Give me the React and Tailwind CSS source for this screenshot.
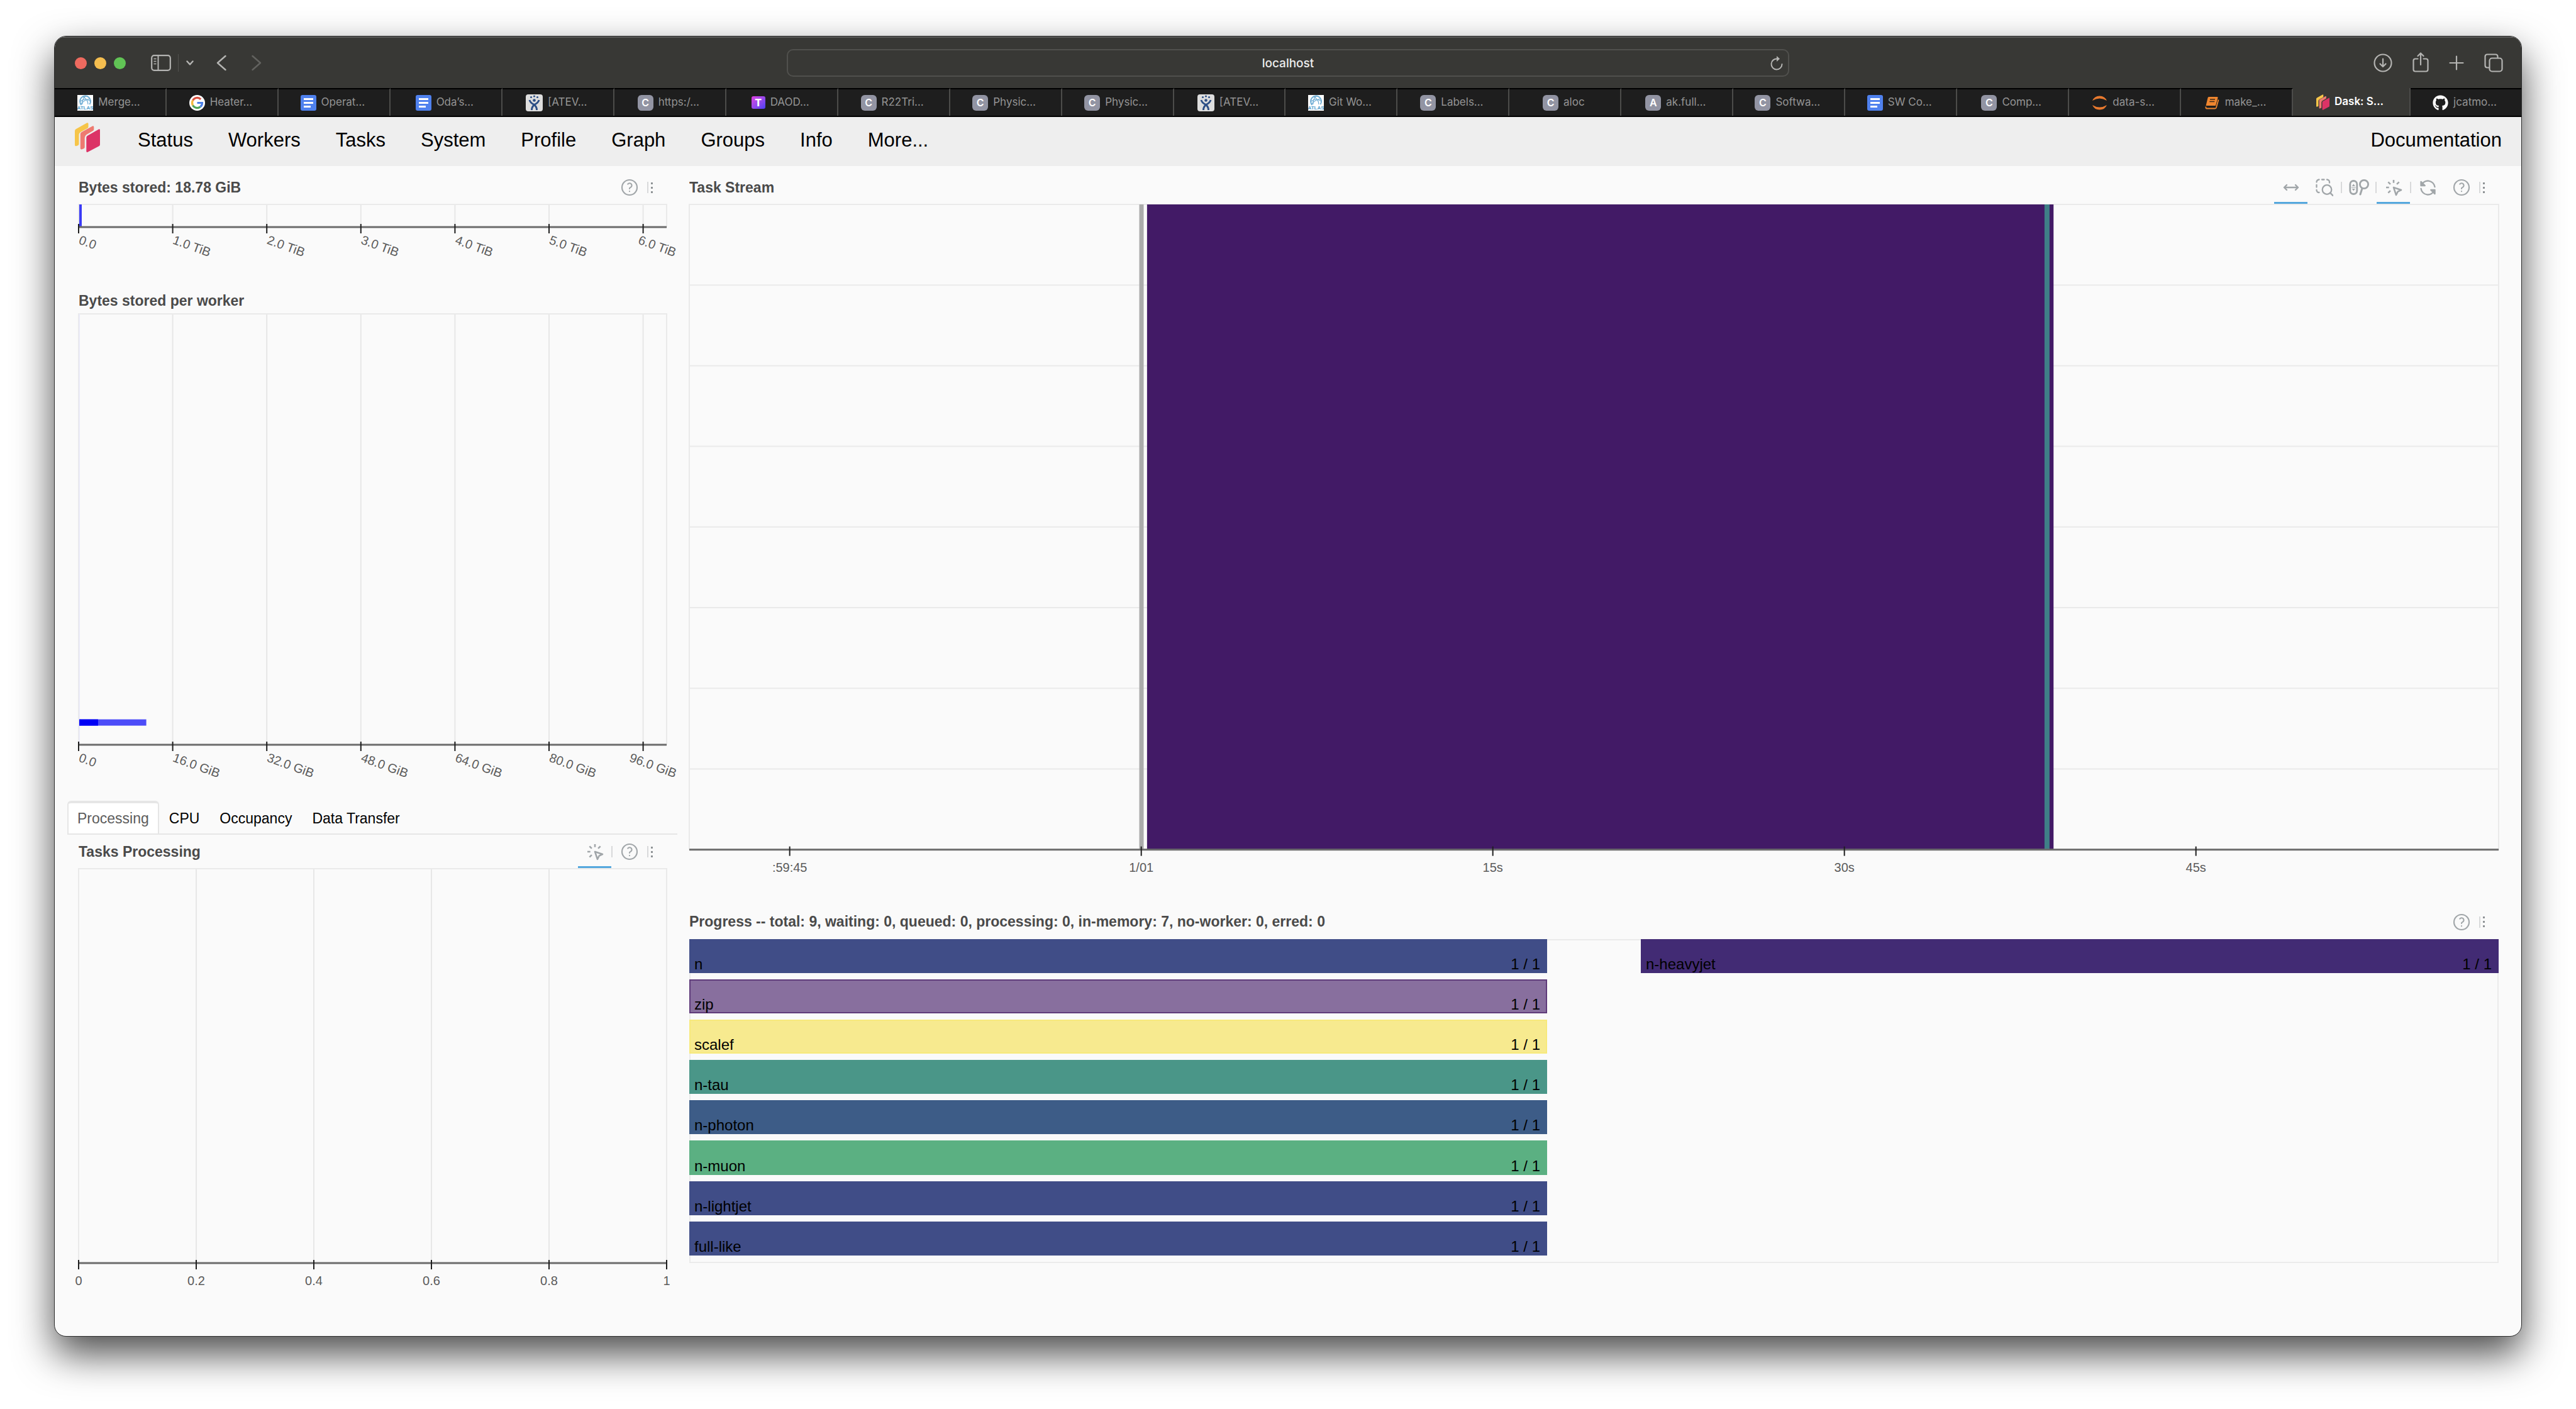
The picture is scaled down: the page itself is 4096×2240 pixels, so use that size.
import React from "react";
import { FaGithub } from "react-icons/fa";

/* ---------- favicons ---------- */

function AtlasIcon() {
  return (
    <svg viewBox="0 0 25 25" className="size-[25px] shrink-0" aria-hidden="true">
      <rect width="25" height="25" fill="#fff" />
      <g fill="none" stroke="#6fadd4" strokeWidth="1.2">
        <path d="M6.500 16a8.500 8.500 0 1 1 13 -1" strokeWidth="2" />
        <path d="M5 10q8 -6 16 0M6 14q6 -7 14 -8M9 3q8 4 8 12M14 1q-7 5 -6 14" />
      </g>
      <text x="12.5" y="22.5" textAnchor="middle" fontSize="8" fontWeight="700" fill="#4f9ccb" fontFamily="Liberation Sans, sans-serif">
        ATLAS
      </text>
    </svg>
  );
}

function GoogleIcon() {
  return (
    <svg viewBox="0 0 25 25" className="size-[25px] shrink-0" aria-hidden="true">
      <circle cx="12.5" cy="12.5" r="12.5" fill="#fff" />
      <g fill="none" strokeWidth="3.2">
        <path d="M18.2 6.8A8 8 0 0 0 5.6 8.5" stroke="#d9503f" />
        <path d="M5.6 8.5a8 8 0 0 0 0 8" stroke="#f3b93f" />
        <path d="M5.6 16.5a8 8 0 0 0 12 2.2" stroke="#4fa45a" />
        <path d="M17.6 18.7a8 8 0 0 0 2.9 -6.2h-8" stroke="#4a7fe8" />
      </g>
    </svg>
  );
}

function DocsIcon() {
  return (
    <svg viewBox="0 0 25 25" className="size-[25px] shrink-0" aria-hidden="true">
      <rect width="25" height="25" rx="3" fill="#4f81ee" />
      <path d="M5 6.5h15M5 12.5h15M5 18.5h11" stroke="#fff" strokeWidth="3.2" />
    </svg>
  );
}

function JiraIcon() {
  return (
    <svg viewBox="0 0 27 27" className="size-[27px] shrink-0" aria-hidden="true">
      <rect width="27" height="27" rx="4" fill="#dedede" />
      <g fill="none" stroke="#2d4f86" strokeWidth="3">
        <path d="M6 9q1 4 6.500 7q5 3 5 9" />
        <path d="M21 9q-1 4 -6.500 7q-5 3 -5 9" />
      </g>
      <g fill="#2d4f86">
        <circle cx="8.500" cy="4.500" r="1.500" />
        <circle cx="13.500" cy="3" r="1.600" />
        <circle cx="18.500" cy="4.500" r="1.500" />
        <circle cx="13.500" cy="9.500" r="2.300" />
      </g>
    </svg>
  );
}

function LetterIcon({ letter }) {
  return (
    <span className="flex size-[25px] shrink-0 items-center justify-center rounded-[6px] bg-[#9294a3] text-[16px] leading-none font-semibold text-white" aria-hidden="true">
      {letter}
    </span>
  );
}

function TIcon() {
  return (
    <span className="flex h-[20px] w-[22px] shrink-0 items-center justify-center rounded-[3px] bg-linear-to-br from-[#e03be0] to-[#4a3cf5] text-[16px] leading-none font-extrabold text-white" aria-hidden="true">
      T
    </span>
  );
}

function JupyterIcon() {
  return (
    <svg viewBox="0 0 25 25" className="size-[25px] shrink-0" aria-hidden="true" fill="#e8792e">
      <path d="M1 9A12.500 12.500 0 0 1 24 9Q12.500 2 1 9z" />
      <path d="M1 16A12.500 12.500 0 0 0 24 16Q12.500 23 1 16z" />
    </svg>
  );
}

function BookIcon() {
  return (
    <svg viewBox="0 0 25 25" className="size-[25px] shrink-0" aria-hidden="true">
      <path d="M7 3h13.500q1.500 0 1 1.500l-3.500 12.500h-15.500l3 -12.500q.4 -1.500 1.500 -1.500z" fill="#f0862f" />
      <path d="M2.500 18.500q-.5 3 1.500 3h13q1.500 0 2 -1.500l3.500 -12.500" fill="none" stroke="#f0862f" strokeWidth="1.800" />
      <path d="M9 7h8M8.300 10.500h8" stroke="#3a2a1c" strokeWidth="1.600" />
    </svg>
  );
}

function DaskIcon({ className }) {
  return (
    <svg viewBox="0 0 40 47" className={className} aria-hidden="true">
      <path d="M0 13q0 -2 2 -3L19 .6q2.500 -1 2.500 1.400v4.500q0 1.500 -1.500 2.500L10 14.500q-3.500 2 -3.500 5V34q0 1.500 -1.500 2.200l-3 1Q0 37.500 0 35.500z" fill="#f6c549" />
      <path d="M8.800 18q0 -2 2 -3L28 5.500q2.300 -1 2.300 1.500v3.500q0 1.500 -1.500 2.500L18.500 19q-2.800 2 -2.800 5V39q0 1.500 -1.500 2.200l-3.200 1.300q-2.200 .5 -2.200 -1.700z" fill="#ee7a70" />
      <path d="M18.300 23.500q0 -1.800 1.800 -2.800L38 10.500q2 -1 2 1.200v23q0 1.800 -1.500 2.600L20.500 46.700q-2.200 .8 -2.200 -1.200z" fill="#dc3366" />
    </svg>
  );
}

const C = <LetterIcon letter="C" />;

const browserTabs = [
  { icon: <AtlasIcon />, label: "Merge…" },
  { icon: <GoogleIcon />, label: "Heater…" },
  { icon: <DocsIcon />, label: "Operat…" },
  { icon: <DocsIcon />, label: "Oda’s…" },
  { icon: <JiraIcon />, label: "[ATEV…" },
  { icon: C, label: "https:/…" },
  { icon: <TIcon />, label: "DAOD…" },
  { icon: C, label: "R22Tri…" },
  { icon: C, label: "Physic…" },
  { icon: C, label: "Physic…" },
  { icon: <JiraIcon />, label: "[ATEV…" },
  { icon: <AtlasIcon />, label: "Git Wo…" },
  { icon: C, label: "Labels…" },
  { icon: C, label: "aloc" },
  { icon: <LetterIcon letter="A" />, label: "ak.full…" },
  { icon: C, label: "Softwa…" },
  { icon: <DocsIcon />, label: "SW Co…" },
  { icon: C, label: "Comp…" },
  { icon: <JupyterIcon />, label: "data-s…" },
  { icon: <BookIcon />, label: "make_…" },
  { icon: <DaskIcon className="h-[25px] w-[21px] shrink-0" />, label: "Dask: S…", active: true },
  { icon: <FaGithub className="size-[25px] shrink-0 text-white" aria-hidden="true" />, label: "jcatmo…" },
];

/* ---------- browser chrome ---------- */

function ChromeButton({ label, className = "", children }) {
  return (
    <button type="button" aria-label={label} className={"flex items-center justify-center " + className}>
      {children}
    </button>
  );
}

function TitleBar() {
  return (
    <div className="grid h-[80px] grid-cols-[1164fr_1595fr_1164fr] items-center bg-[#383835] text-[#b4b4b2]">
      <div className="flex items-center pl-8">
        <div className="flex gap-3">
          <button type="button" aria-label="Close window" className="size-[19px] rounded-full bg-[#ee6a5f]" />
          <button type="button" aria-label="Minimize window" className="size-[19px] rounded-full bg-[#f5be4f]" />
          <button type="button" aria-label="Zoom window" className="size-[19px] rounded-full bg-[#61c455]" />
        </div>
        <ChromeButton label="Show sidebar" className="ml-10">
          <svg viewBox="0 0 32 26" className="h-[26px] w-[32px]" fill="none" stroke="currentColor">
            <rect x="1.200" y="1.200" width="29.600" height="23.600" rx="4" strokeWidth="2.200" />
            <path d="M11.500 1v24" strokeWidth="2" />
            <path d="M4.500 6.500h4M4.500 10.500h4M4.500 14.500h4" strokeWidth="1.600" />
          </svg>
        </ChromeButton>
        <div className="ml-[11px] h-7 w-px bg-[#52524f]" />
        <ChromeButton label="Sidebar options" className="ml-3">
          <svg viewBox="0 0 12 8" className="h-[8px] w-[12px]" fill="none" stroke="currentColor" strokeWidth="2.400" strokeLinecap="round" strokeLinejoin="round">
            <path d="M1.500 1.500l4.500 5l4.500 -5" />
          </svg>
        </ChromeButton>
        <ChromeButton label="Back" className="ml-9">
          <svg viewBox="0 0 16 26" className="h-[26px] w-[16px]" fill="none" stroke="currentColor" strokeWidth="2.400" strokeLinecap="round" strokeLinejoin="round">
            <path d="M14.500 2L2 13l12.500 11" />
          </svg>
        </ChromeButton>
        <ChromeButton label="Forward" className="ml-10 text-[#62625f]">
          <svg viewBox="0 0 16 26" className="h-[26px] w-[16px]" fill="none" stroke="currentColor" strokeWidth="2.400" strokeLinecap="round" strokeLinejoin="round">
            <path d="M1.500 2L14 13L1.500 24" />
          </svg>
        </ChromeButton>
      </div>

      <div className="relative flex h-11 items-center rounded-[10px] border-2 border-[#50504d]">
        <input
          aria-label="Address"
          defaultValue="localhost"
          className="h-full w-full bg-transparent text-center text-[19px] font-medium text-[#ececec] outline-none"
        />
        <button type="button" aria-label="Reload page" className="absolute right-2">
          <svg viewBox="0 0 20 24" className="h-[24px] w-[20px]" fill="none" stroke="currentColor" strokeWidth="2">
            <path d="M11 5.500A8.500 8.500 0 1 0 18.500 14" strokeLinecap="round" />
            <path d="M10 1l5 4.500l-5 4.500z" fill="currentColor" stroke="none" />
          </svg>
        </button>
      </div>

      <div className="flex items-center justify-end pr-[29px]">
        <ChromeButton label="Downloads">
          <svg viewBox="0 0 30 30" className="size-[30px]" fill="none" stroke="currentColor" strokeWidth="2.200" strokeLinecap="round" strokeLinejoin="round">
            <circle cx="15" cy="15" r="13.500" />
            <path d="M15 8.500v12.500M10.500 16.500l4.500 4.500l4.500 -4.500" />
          </svg>
        </ChromeButton>
        <ChromeButton label="Share" className="ml-8 pb-[3px]">
          <svg viewBox="0 0 26 32" className="h-[32px] w-[26px]" fill="none" stroke="currentColor" strokeWidth="2.200" strokeLinecap="round" strokeLinejoin="round">
            <path d="M8.500 10.500H4.500q-3 0 -3 3v14q0 3 3 3h17q3 0 3 -3v-14q0 -3 -3 -3H17.500" />
            <path d="M13 20V2M8.500 6l4.500 -4.500l4.500 4.500" />
          </svg>
        </ChromeButton>
        <ChromeButton label="New tab" className="ml-8">
          <svg viewBox="0 0 24 24" className="size-[24px]" stroke="currentColor" strokeWidth="2.200" strokeLinecap="round">
            <path d="M12 1.500v21M1.500 12h21" />
          </svg>
        </ChromeButton>
        <ChromeButton label="Tab overview" className="ml-8">
          <svg viewBox="0 0 30 30" className="size-[30px]" fill="none" stroke="currentColor" strokeWidth="2.200" strokeLinejoin="round">
            <rect x="8.500" y="7.500" width="20" height="21" rx="4" />
            <path d="M8 22.500H5q-3.500 0 -3.500 -3.500V5q0 -3.500 3.500 -3.500h13q3.500 0 3.500 3.500v2" />
          </svg>
        </ChromeButton>
      </div>
    </div>
  );
}

function BrowserTabs() {
  return (
    <div role="tablist" aria-label="Browser tabs" className="flex h-[46px] border-b-2 border-black bg-[#1e1e1e]">
      {browserTabs.map((tab, i) => (
        <button
          key={i}
          type="button"
          role="tab"
          aria-selected={!!tab.active}
          className={
            tab.active
              ? "flex w-[187px] items-center justify-center gap-2 border-r-2 border-[#4c4c4a] bg-[#383835] pr-1 text-[17px] font-semibold text-white"
              : "flex min-w-0 flex-1 items-center justify-center gap-2 border-t-2 border-r-2 border-t-black border-r-[#4c4c4a] pr-1 text-[17px] text-[#949494] last:border-r-0"
          }
        >
          {tab.icon}
          <span className="whitespace-nowrap">{tab.label}</span>
        </button>
      ))}
    </div>
  );
}

/* ---------- Dask page ---------- */

const navItems = ["Status", "Workers", "Tasks", "System", "Profile", "Graph", "Groups", "Info", "More..."];

function NavBar() {
  return (
    <nav className="flex h-[78px] items-center bg-[#eeeeee] pr-[31px] pb-1 pl-8 text-[31px] text-black">
      <a href="#status" aria-label="Dask" className="self-start pt-[9px]">
        <DaskIcon className="h-[47px] w-[40px]" />
      </a>
      <div className="ml-[60px] flex gap-14">
        {navItems.map((item) => (
          <a key={item} href={"#" + item.toLowerCase()}>
            {item}
          </a>
        ))}
      </div>
      <a href="#documentation" className="ml-auto">
        Documentation
      </a>
    </nav>
  );
}

function ToolIcon({ name }) {
  const stroke = { fill: "none", stroke: "currentColor", strokeLinecap: "round", strokeLinejoin: "round" };
  if (name === "pan")
    return (
      <svg viewBox="0 0 26 26" className="size-[26px]" {...stroke} strokeWidth="2.400">
        <path d="M2 13h22M6 9l-4 4l4 4M20 9l4 4l-4 4" />
      </svg>
    );
  if (name === "box")
    return (
      <svg viewBox="0 0 28 28" className="size-[28px]" {...stroke} strokeWidth="2.300">
        <path d="M1.500 5.500a4 4 0 0 1 4 -4M10 1.500h3.500M18 1.500a4 4 0 0 1 4 4v1M1.500 10v3.500M1.500 18a4 4 0 0 0 4 4" />
        <circle cx="18" cy="17.500" r="7.300" />
        <path d="M23.200 22.700l4 4" strokeWidth="2.600" />
      </svg>
    );
  if (name === "wheel")
    return (
      <svg viewBox="0 0 32 28" className="h-[28px] w-[32px]" {...stroke} strokeWidth="2.800">
        <rect x="1.800" y="3.500" width="11" height="21" rx="5.500" />
        <circle cx="24" cy="9" r="6.600" />
        <path d="M21 15.500l-3 9.500" strokeWidth="3" />
        <path d="M7.300 8.500l2.600 3.600h-5.200zM7.300 19.500l2.600 -3.600h-5.200z" fill="currentColor" stroke="none" />
        <path d="M4.500 14h5.600" strokeWidth="1.200" />
      </svg>
    );
  if (name === "tap")
    return (
      <svg viewBox="0 0 24 24" className="size-[32px]" {...stroke} strokeLinecap="butt" strokeWidth="1.900">
        <path d="M3 12h3.500M12 3v3.500M8.200 8.200L5.500 5.500M15.800 8.200l2.700 -2.700M8.200 15.800L5.500 18.500M12 12l9 3l-4 2l-2 4z" />
      </svg>
    );
  if (name === "reset")
    return (
      <svg viewBox="0 0 24 24" className="size-[33px]" {...stroke} strokeWidth="1.700">
        <path d="M20 11a8.100 8.100 0 0 0 -15.500 -2M4 13a8.100 8.100 0 0 0 15.500 2" />
        <path d="M4 5v4.500h4.500zM20 19v-4.500h-4.500z" fill="currentColor" />
      </svg>
    );
  return (
    <svg viewBox="0 0 24 24" className="size-[32px]" {...stroke} strokeWidth="1.600">
      <circle cx="12" cy="12" r="9" />
      <path d="M12 16.500v.2M12 13.500a1.500 1.500 0 0 1 1 -1.500a2.600 2.600 0 1 0 -3 -4" />
    </svg>
  );
}

const toolNames = { pan: "Pan", box: "Box zoom", wheel: "Wheel zoom", tap: "Tap", reset: "Reset", help: "Help" };

function Tool({ name, active }) {
  return (
    <button
      type="button"
      aria-label={toolNames[name]}
      className={
        "flex h-full w-[53px] items-center justify-center border-y-4 border-t-transparent " +
        (active ? "border-b-[#54a7dd]" : "border-b-transparent")
      }
    >
      <ToolIcon name={name} />
    </button>
  );
}

function Separator() {
  return <div className="h-[18px] w-[2px] shrink-0 bg-[#d8d9da]" />;
}

function ToolBar({ children }) {
  return (
    <div className="flex h-full items-center pr-[22px] text-[#a1a6a9]">
      {children}
      <Tool name="help" />
      <div className="ml-[2px] flex items-center gap-1">
        <Separator />
        <div className="flex flex-col gap-1">
          {[0, 1, 2].map((n) => (
            <span key={n} className="size-[3px] bg-[#8f9396]" />
          ))}
        </div>
      </div>
    </div>
  );
}

function PlotHeader({ title, children }) {
  return (
    <div className="flex h-[54px] shrink-0 items-center justify-between">
      <h2 className="text-[23px] leading-none font-bold whitespace-nowrap text-[#4a4a4a]">{title}</h2>
      {children}
    </div>
  );
}

function XAxis({ ticks, angled }) {
  return (
    <g>
      <line x1="0" x2="100%" y1="100%" y2="100%" stroke="#6b6b6b" strokeWidth="3" />
      {ticks.map((t) => (
        <svg key={t.label} x={t.at + "%"} y="100%" overflow="visible">
          <line x1="0" x2="0" y1="-5" y2="10" stroke="#1f1f1f" strokeWidth="2" />
          {angled ? (
            <text fontSize="20" fill="#5b5b5b" transform={"translate(" + ((t.shift || 0) - 1) + " 26) rotate(20)"}>
              {t.label}
            </text>
          ) : (
            <text fontSize="20" fill="#5b5b5b" y="35" textAnchor="middle">
              {t.label}
            </text>
          )}
        </svg>
      ))}
    </g>
  );
}

const sixTicks = (labels, lastShift) =>
  labels.map((label, i) => ({ label, at: i * 16, shift: i === labels.length - 1 ? lastShift : 0 }));

const totalTicks = sixTicks(["0.0", "1.0 TiB", "2.0 TiB", "3.0 TiB", "4.0 TiB", "5.0 TiB", "6.0 TiB"], -8);
const workerTicks = sixTicks(["0.0", "16.0 GiB", "32.0 GiB", "48.0 GiB", "64.0 GiB", "80.0 GiB", "96.0 GiB"], -22);
const unitTicks = ["0", "0.2", "0.4", "0.6", "0.8", "1"].map((label, i) => ({ label, at: i * 20 }));
const timeTicks = [":59:45", "1/01", "15s", "30s", "45s"].map((label, i) => ({ label, at: 5.55 + i * 19.43 }));

function VerticalGrid({ ticks }) {
  return ticks.map((t) => <line key={t.label} x1={t.at + "%"} x2={t.at + "%"} y1="0" y2="100%" stroke="#e7e7e7" strokeWidth="2" />);
}

function Frame() {
  return <rect width="100%" height="100%" fill="none" stroke="#eaeaea" strokeWidth="2" />;
}

function Chart({ label, children }) {
  return (
    <svg role="img" aria-label={label} className="block h-full w-full overflow-visible">
      {children}
    </svg>
  );
}

function TasksTabs() {
  return (
    <div role="tablist" aria-label="Worker plots" className="flex h-[54px] border-b-2 border-[#e6e6e6] text-[23px] text-black">
      <button type="button" role="tab" aria-selected="true" className="rounded-t-[6px] border-x-2 border-t-4 border-[#e6e6e6] bg-white px-[14px] text-[#5c5c5c]">
        Processing
      </button>
      {["CPU", "Occupancy", "Data Transfer"].map((t) => (
        <button key={t} type="button" role="tab" aria-selected="false" className="border-x-2 border-t-4 border-transparent px-[14px]">
          {t}
        </button>
      ))}
    </div>
  );
}

function LeftColumn() {
  return (
    <div className="flex min-w-0 flex-col">
      <section className="flex flex-col pr-[17px] pl-[18px]">
        <PlotHeader title="Bytes stored: 18.78 GiB">
          <ToolBar />
        </PlotHeader>
        <div className="h-9">
          <Chart label="Bytes stored">
            <VerticalGrid ticks={totalTicks} />
            <Frame />
            <rect x="1" width="4" height="100%" fill="#3b3bf6" />
            <XAxis ticks={totalTicks} angled />
          </Chart>
        </div>
      </section>

      <section className="mt-24 flex flex-[726] flex-col pr-[17px] pl-[18px]">
        <div className="flex h-[42px] items-center">
          <h2 className="text-[23px] leading-none font-bold text-[#4a4a4a]">Bytes stored per worker</h2>
        </div>
        <div className="min-h-0 flex-1">
          <Chart label="Bytes stored per worker">
            <VerticalGrid ticks={workerTicks} />
            <Frame />
            <line x1="1" x2="1" y1="0" y2="100%" stroke="#eaeaf6" strokeWidth="2" />
            <svg y="94.1%" overflow="visible">
              <rect x="1" width="11.4%" height="10" fill="#4c4cf8" />
              <rect x="1" width="3.2%" height="10" fill="#0000f5" />
            </svg>
            <XAxis ticks={workerTicks} angled />
          </Chart>
        </div>
      </section>

      <div className="mt-[89px]">
        <TasksTabs />
      </div>

      <section className="flex flex-[680] flex-col pr-[17px] pb-[116px] pl-[18px]">
        <PlotHeader title="Tasks Processing">
          <ToolBar>
            <Tool name="tap" active />
            <Separator />
          </ToolBar>
        </PlotHeader>
        <div className="min-h-0 flex-1">
          <Chart label="Tasks processing">
            <VerticalGrid ticks={unitTicks} />
            <Frame />
            <XAxis ticks={unitTicks} />
          </Chart>
        </div>
      </section>
    </div>
  );
}

const leftBars = [
  { name: "n", color: "bg-[#404d87] border-[#404d87]" },
  { name: "zip", color: "bg-[#886f9e] border-[#5f3b7a]" },
  { name: "scalef", color: "bg-[#f7ea8f] border-[#f7e97c]" },
  { name: "n-tau", color: "bg-[#4a9688] border-[#4a9688]" },
  { name: "n-photon", color: "bg-[#3d5c87] border-[#3d5c87]" },
  { name: "n-muon", color: "bg-[#5bb082] border-[#5bb082]" },
  { name: "n-lightjet", color: "bg-[#404d87] border-[#404d87]" },
  { name: "full-like", color: "bg-[#404d87] border-[#404d87]" },
];
const rightBars = [{ name: "n-heavyjet", color: "bg-[#422b74] border-[#422b74]" }];

function ProgressColumn({ bars }) {
  return (
    <ul className="grid grid-rows-8 gap-[10px]">
      {bars.map((b) => (
        <li key={b.name} className={"flex items-end justify-between border-2 pr-[9px] pl-[6px] text-[24px] leading-none text-black " + b.color}>
          <span>{b.name}</span>
          <span>1 / 1</span>
        </li>
      ))}
    </ul>
  );
}

function RightColumn() {
  return (
    <div className="flex min-w-0 flex-col">
      <section className="flex flex-[1079] flex-col">
        <PlotHeader title="Task Stream">
          <ToolBar>
            <Tool name="pan" active />
            <Tool name="box" />
            <Separator />
            <Tool name="wheel" />
            <Separator />
            <Tool name="tap" active />
            <Separator />
            <Tool name="reset" />
          </ToolBar>
        </PlotHeader>
        <div className="min-h-0 flex-1">
          <Chart label="Task stream">
            {[1, 2, 3, 4, 5, 6, 7].map((n) => (
              <line key={n} x1="0" x2="100%" y1={n * 12.5 + "%"} y2={n * 12.5 + "%"} stroke="#eaeaea" strokeWidth="2" />
            ))}
            <Frame />
            <rect x="24.87%" width="7" height="100%" fill="#ababab" />
            <rect x="25.3%" width="50.1%" height="100%" fill="#421a66" />
            <rect x="74.9%" width="8" height="100%" fill="#3f7f87" />
            <XAxis ticks={timeTicks} />
          </Chart>
        </div>
      </section>

      <section className="mt-[88px] flex flex-[569] flex-col pb-[116px]">
        <PlotHeader title="Progress -- total: 9, waiting: 0, queued: 0, processing: 0, in-memory: 7, no-worker: 0, erred: 0">
          <ToolBar />
        </PlotHeader>
        <div className="grid flex-1 grid-cols-[1364fr_149fr_1364fr] pb-[12px] shadow-[inset_0_0_0_2px_#ebebeb]">
          <ProgressColumn bars={leftBars} />
          <div />
          <ProgressColumn bars={rightBars} />
        </div>
      </section>
    </div>
  );
}

export default function App() {
  return (
    <div className="flex min-h-screen flex-col bg-white px-[86px] pt-[57px] pb-[115px] font-['Liberation_Sans',Arial,sans-serif]">
      <div className="flex flex-1 flex-col overflow-hidden rounded-[19px] border border-[#2a2a2a] bg-[#fafafa] shadow-[0_28px_62px_rgba(0,0,0,0.7)]">
        <header className="border-t-2 border-[#5a5a58] font-['Inter',sans-serif]">
          <TitleBar />
          <BrowserTabs />
        </header>
        <NavBar />
        <main className="grid flex-1 grid-cols-[970fr_2877fr] gap-x-[19px] pt-[7px] pr-[36px] pl-5">
          <LeftColumn />
          <RightColumn />
        </main>
      </div>
    </div>
  );
}
